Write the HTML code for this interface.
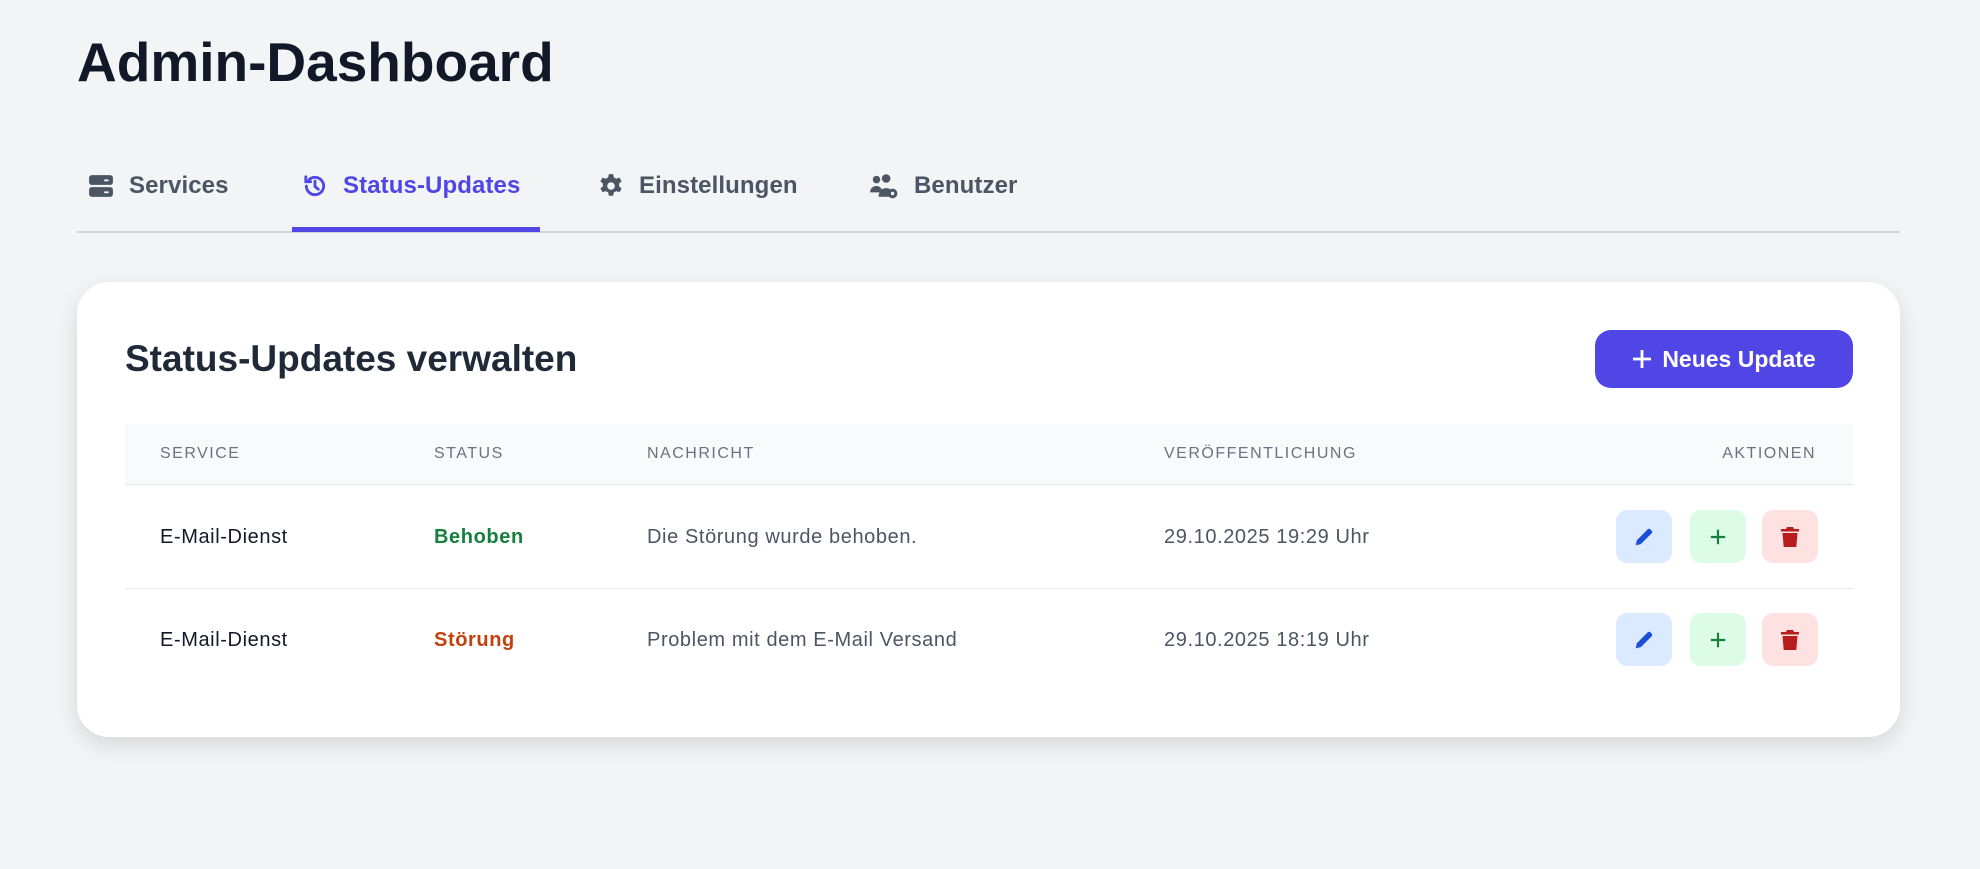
<!DOCTYPE html>
<html><head><meta charset="utf-8"><style>
*{margin:0;padding:0;box-sizing:border-box}
body{width:1980px;height:869px;background:#f3f4f6;font-family:"Liberation Sans",sans-serif;position:relative;overflow:hidden}
.abs{position:absolute}
h1{position:absolute;left:77px;top:30px;font-size:55px;font-weight:700;color:#111827;letter-spacing:0px}
.tab{position:absolute;top:171px;font-size:24px;font-weight:700;color:#4b5563;display:flex;align-items:center;gap:15px;height:30px;letter-spacing:0.1px}
.tab svg{width:26px;height:26px}
.card{position:absolute;left:77px;top:282px;width:1823px;height:455px;background:#fff;border-radius:32px;box-shadow:0 8px 24px rgba(0,0,0,.12)}
.th{position:absolute;top:445px;font-size:16px;color:#6b7280;letter-spacing:1.5px;font-weight:500}
.td{position:absolute;font-size:20px;color:#4b5563;letter-spacing:0.6px}
.btn{position:absolute;width:56px;height:53px;border-radius:11px;display:flex;align-items:center;justify-content:center}
</style></head><body>
<h1>Admin-Dashboard</h1>

<div class="tab" style="left:88px"><svg viewBox="0 0 24 24"><rect x="1" y="2" width="22" height="9" rx="2.5" fill="#4b5563"/><rect x="1" y="13" width="22" height="9" rx="2.5" fill="#4b5563"/><rect x="15" y="6" width="4" height="1.6" fill="#fff"/><rect x="15" y="17" width="4" height="1.6" fill="#fff"/></svg><span>Services</span></div>
<div class="tab" style="left:302px;color:#4f46e5"><svg viewBox="0 0 24 24" fill="none" stroke="#4f46e5" stroke-width="2.6" stroke-linecap="round"><path d="M4 12a8 8 0 1 0 2.5-5.8"/><path d="M3.5 3.5v4.5h4.5"/><path d="M12 7.5v5l3 2.5"/></svg><span>Status-Updates</span></div>
<div class="tab" style="left:598px"><svg viewBox="0 0 24 24"><path fill="#4b5563" fill-rule="evenodd" d="M10 1h4l.6 3 2.3 1.3 2.9-1 2 3.4-2.3 2v2.6l2.3 2-2 3.4-2.9-1-2.3 1.3-.6 3h-4l-.6-3-2.3-1.3-2.9 1-2-3.4 2.3-2v-2.6l-2.3-2 2-3.4 2.9 1L9.4 4z M12 8.5a3.5 3.5 0 1 0 0 7 3.5 3.5 0 0 0 0-7z"/></svg><span>Einstellungen</span></div>
<div class="tab" style="left:869px"><svg viewBox="0 0 28 24" style="width:30px"><circle cx="7" cy="6" r="3.5" fill="#4b5563"/><circle cx="16" cy="5" r="4" fill="#4b5563"/><path d="M1 18c0-4 3-6 6-6s5 2 5 5v1z" fill="#4b5563"/><path d="M9 22c0-5 3-8 7-8 2 0 3 .5 4 1.5v6.5z" fill="#4b5563"/><circle cx="22" cy="19" r="4.5" fill="#4b5563"/><circle cx="22" cy="19" r="1.6" fill="#f3f4f6"/></svg><span>Benutzer</span></div>

<div class="abs" style="left:77px;top:231px;width:1823px;height:2px;background:#d1d5db"></div>
<div class="abs" style="left:292px;top:227px;width:248px;height:5px;background:#4f46e5"></div>

<div class="card"></div>
<div class="abs" style="left:125px;top:338px;font-size:37px;font-weight:700;color:#1f2937">Status-Updates verwalten</div>
<div class="abs" style="left:1595px;top:330px;width:258px;height:58px;background:#4f46e5;border-radius:16px;color:#fff;font-size:23px;font-weight:700;display:flex;align-items:center;justify-content:center;gap:10px"><svg width="20" height="20" viewBox="0 0 20 20"><path d="M10 1v18M1 10h18" stroke="#fff" stroke-width="2.8"/></svg>Neues Update</div>

<div class="abs" style="left:125px;top:424px;width:1728px;height:61px;background:#f9fafb;border-bottom:1px solid #e5e7eb"></div>
<div class="th" style="left:160px">SERVICE</div>
<div class="th" style="left:434px">STATUS</div>
<div class="th" style="left:647px">NACHRICHT</div>
<div class="th" style="left:1164px">VERÖFFENTLICHUNG</div>
<div class="th" style="left:1666px;width:150px;text-align:right">AKTIONEN</div>
<div class="abs" style="left:125px;top:588px;width:1728px;height:1px;background:#e5e7eb"></div>

<div class="td" style="left:160px;top:526px;color:#111827;font-weight:500">E-Mail-Dienst</div>
<div class="td" style="left:434px;top:526px;color:#15803d;font-weight:700">Behoben</div>
<div class="td" style="left:647px;top:526px">Die Störung wurde behoben.</div>
<div class="td" style="left:1164px;top:526px">29.10.2025 19:29 Uhr</div>

<div class="td" style="left:160px;top:629px;color:#111827;font-weight:500">E-Mail-Dienst</div>
<div class="td" style="left:434px;top:629px;color:#c2410c;font-weight:700">Störung</div>
<div class="td" style="left:647px;top:629px">Problem mit dem E-Mail Versand</div>
<div class="td" style="left:1164px;top:629px">29.10.2025 18:19 Uhr</div>

<div class="btn" style="left:1616px;top:510px;background:#dbeafe"><svg width="22" height="22" viewBox="0 0 24 24"><path d="M3 21l1.2-5.5L16 3.7a2.2 2.2 0 0 1 3 0l1.3 1.3a2.2 2.2 0 0 1 0 3L8.5 19.8z" fill="#1d4ed8"/></svg></div>
<div class="btn" style="left:1690px;top:510px;background:#dcfce7"><svg width="18" height="18" viewBox="0 0 20 20"><path d="M10 2v16M2 10h16" stroke="#15803d" stroke-width="2.4"/></svg></div>
<div class="btn" style="left:1762px;top:510px;background:#fee2e2"><svg width="20" height="22" viewBox="0 0 20 22"><path d="M7 1h6l1 2h5v2.5H1V3h5z" fill="#b91c1c"/><path d="M2.5 7h15l-1.2 14H3.7z" fill="#b91c1c"/></svg></div>
<div class="btn" style="left:1616px;top:613px;background:#dbeafe"><svg width="22" height="22" viewBox="0 0 24 24"><path d="M3 21l1.2-5.5L16 3.7a2.2 2.2 0 0 1 3 0l1.3 1.3a2.2 2.2 0 0 1 0 3L8.5 19.8z" fill="#1d4ed8"/></svg></div>
<div class="btn" style="left:1690px;top:613px;background:#dcfce7"><svg width="18" height="18" viewBox="0 0 20 20"><path d="M10 2v16M2 10h16" stroke="#15803d" stroke-width="2.4"/></svg></div>
<div class="btn" style="left:1762px;top:613px;background:#fee2e2"><svg width="20" height="22" viewBox="0 0 20 22"><path d="M7 1h6l1 2h5v2.5H1V3h5z" fill="#b91c1c"/><path d="M2.5 7h15l-1.2 14H3.7z" fill="#b91c1c"/></svg></div>
</body></html>
